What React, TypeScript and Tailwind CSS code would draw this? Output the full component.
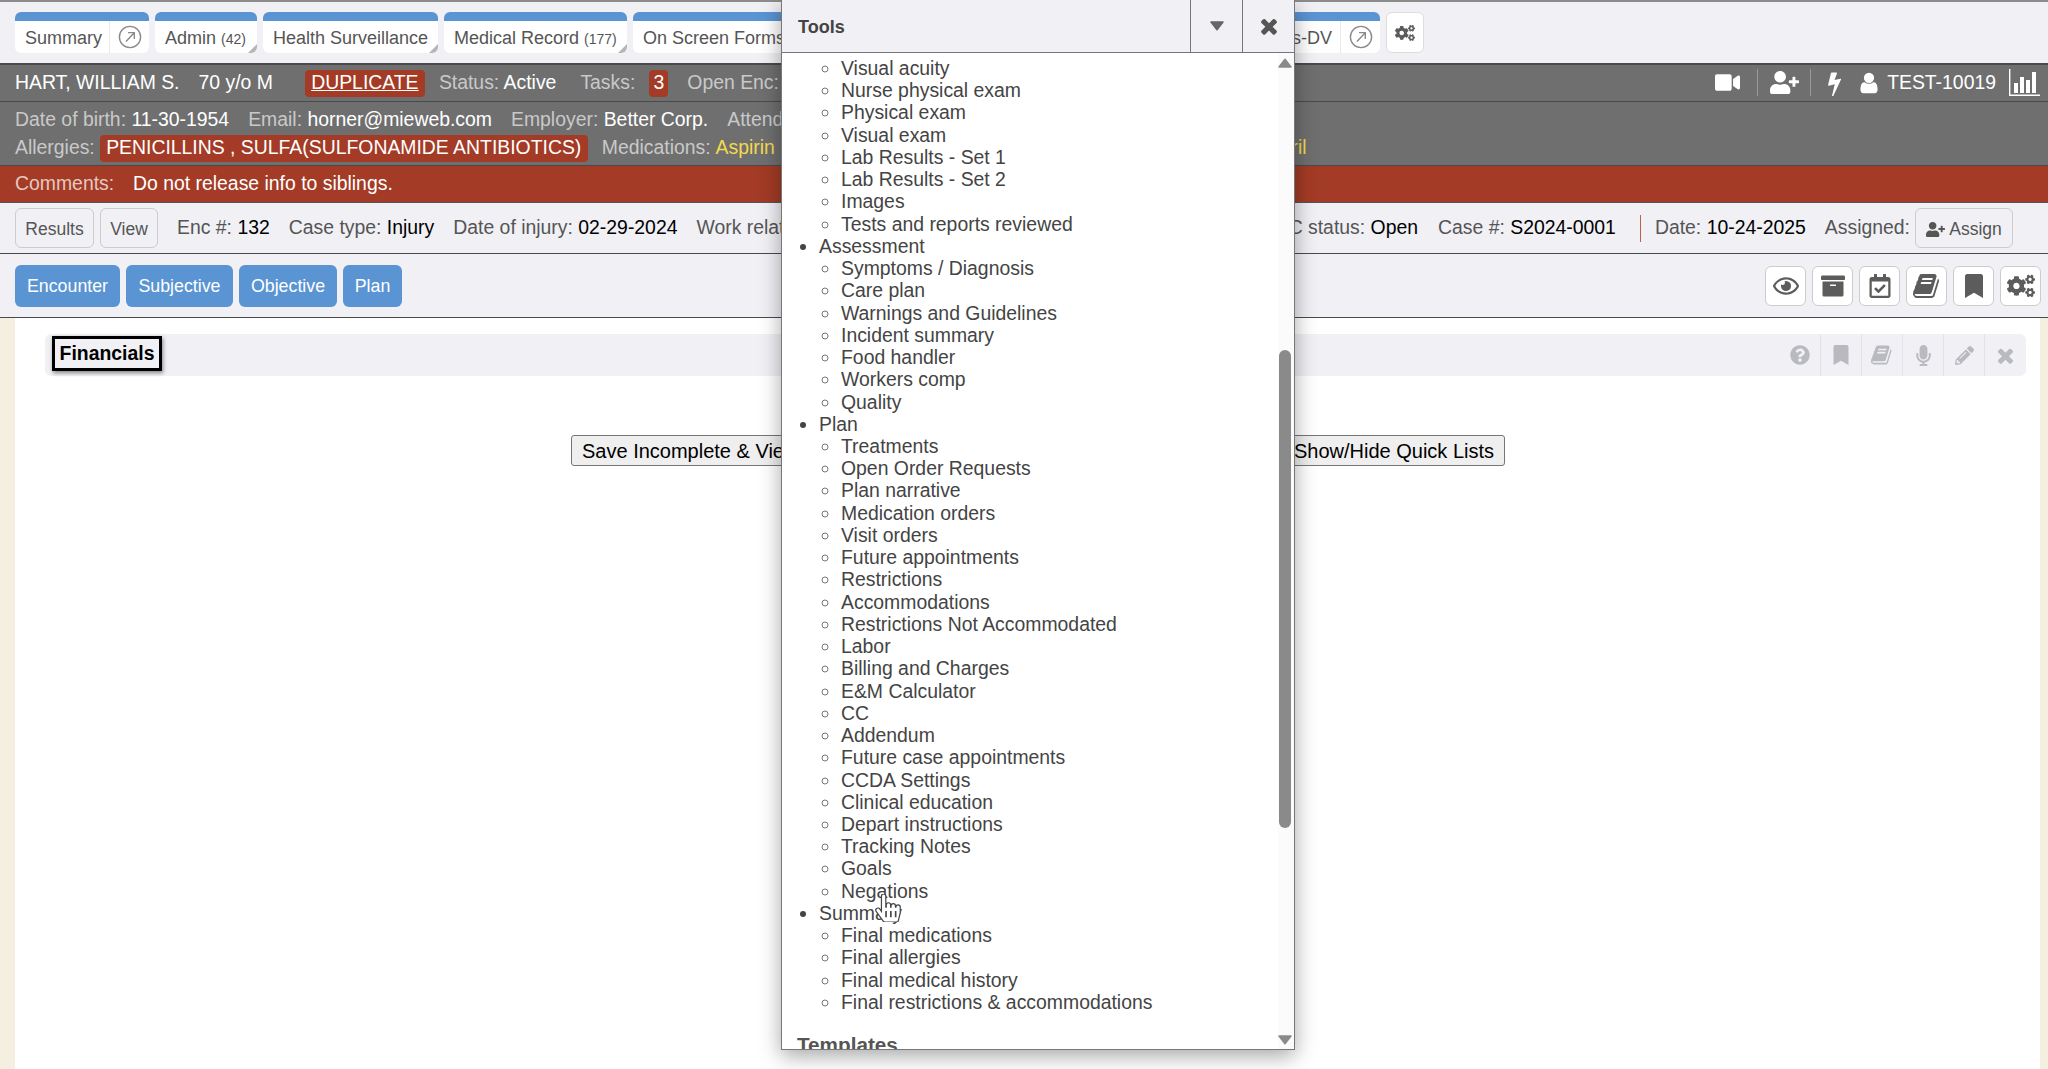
import React from "react";
import { FaVideo, FaUserPlus, FaRegEye, FaArchive, FaRegCalendarCheck, FaBookmark, FaCogs, FaQuestionCircle, FaMicrophone, FaPencilAlt, FaHandPointer } from "react-icons/fa";

const BOOK = "M1639 478q40 57 18 129l-275 906q-19 64-76.5 107.5t-122.5 43.5h-923q-77 0-148.5-53.5t-99.5-131.5q-24-67-2-127 0-4 3-27t4-37q1-8-3-21.5t-3-19.5q2-11 8-21t16.5-23.5 16.5-23.5q23-38 45-91.5t30-91.5q3-10 .5-30t-.5-28q3-11 17-28t17-23q21-36 42-92t25-90q1-9-2.5-32t.5-28q4-13 22-30.5t22-22.5q19-26 42.5-84.5t27.5-96.5q1-8-3-25.5t-2-26.5q2-8 9-18t18-23 17-21q8-12 16.5-30.5t15-35 16-36 19.5-32 26.5-23.5 36-11.5 47.5 5.5l-1 3q38-9 51-9h761q74 0 114 56t18 130l-274 906q-36 119-71.5 153.5t-128.5 34.5h-869q-27 0-38 15-11 16-1 43 24 70 144 70h923q29 0 56-15.5t35-41.5l300-987q7-22 5-57 38 15 59 43zm-1064 2q-4 13 2 22.5t20 9.5h608q13 0 25.5-9.5t16.5-22.5l21-64q4-13-2-22.5t-20-9.5h-608q-13 0-25.5 9.5t-16.5 22.5zm-83 256q-4 13 2 22.5t20 9.5h608q13 0 25.5-9.5t16.5-22.5l21-64q4-13-2-22.5t-20-9.5h-608q-13 0-25.5 9.5t-16.5 22.5z";
const TIMES = "M1490 1322q0 40-28 68l-136 136q-28 28-68 28t-68-28l-294-294-294 294q-28 28-68 28t-68-28l-136-136q-28-28-28-68t28-68l294-294-294-294q-28-28-28-68t28-68l136-136q28-28 68-28t68 28l294 294 294-294q28-28 68-28t68 28l136 136q28 28 28 68t-28 68l-294 294 294 294q28 28 28 68z";
const BOLT = "M1303 611q18 20 7 44l-540 1157q-13 25-42 25-4 0-14-2-17-5-25.5-19t-4.5-30l197-808-406 101q-4 1-12 1-18 0-31-11-18-15-13-39l201-825q4-14 16-23t28-9h328q19 0 32 12.5t13 29.5q0 8-5 18l-171 463 396-98q8-2 12-2 19 0 34 15z";
const USER = "M1536 1399q0 109-62.5 187t-150.5 78h-854q-88 0-150.5-78t-62.5-187q0-85 8.5-160.5t31.5-152 58.5-131 94-89 134.5-34.5q131 128 313 128t313-128q76 0 134.5 34.5t94 89 58.5 131 31.5 152 8.5 160.5zm-256-887q0 159-112.5 271.5t-271.5 112.5-271.5-112.5-112.5-271.5 112.5-271.5 271.5-112.5 271.5 112.5 112.5 271.5z";

function Fa4({ d, size, className = "" }: { d: string; size: number; className?: string }) {
  return (
    <svg className={className} width={size} height={size} viewBox="0 0 1792 1792" fill="currentColor">
      <path d={d} />
    </svg>
  );
}

function Tri({ up, cls }: { up?: boolean; cls: string }) {
  return (
    <svg className={cls} width="14" height="10" viewBox="0 0 14 10" fill="currentColor" stroke="currentColor" strokeWidth="1.5" strokeLinejoin="round">
      <path d={up ? "M7 1.2 L13 9 H1 Z" : "M1 1 H13 L7 8.8 Z"} />
    </svg>
  );
}

function Ext() {
  return (
    <svg width="24" height="24" viewBox="0 0 24 24" fill="none" stroke="#8a8a8a" strokeWidth="1.4">
      <circle cx="12" cy="12" r="10.6" />
      <path d="M8 16.5 L16 8 M10 7.6 H16.3 V14" />
    </svg>
  );
}

function Corner() {
  return (
    <svg className="absolute right-0 bottom-0" width="9" height="9" viewBox="0 0 9 9">
      <path d="M9 0 V9 H0 Z" fill="#b5b5b5" />
    </svg>
  );
}

function Tab({ w, label, count, corner, ext, grow, right }: { w?: string; label: string; count?: string; corner?: boolean; ext?: boolean; grow?: boolean; right?: boolean }) {
  return (
    <div className={`${w ?? ""} ${grow ? "flex-1 min-w-0" : ""} relative h-[41px] bg-white rounded-md border-t-[9px] border-[#5a94d3] flex items-center overflow-hidden`}>
      <div className={`flex-1 min-w-0 whitespace-nowrap text-[#555] text-[18px] pt-[2px] ${right ? "text-right pr-[8px]" : "pl-[10px]"}`}>
        {label}
        {count && <span className="text-[14px] ml-[5px]">{count}</span>}
      </div>
      {ext && (
        <div className="w-[40px] h-full border-l border-[#e8e8ee] flex items-center justify-center shrink-0">
          <Ext />
        </div>
      )}
      {corner && <Corner />}
    </div>
  );
}

function L({ k, v, cls }: { k: string; v: string; cls: string }) {
  return (
    <span className={`whitespace-nowrap ${cls}`}>
      {k} <span className="text-white">{v}</span>
    </span>
  );
}

function E({ k, v, cls = "" }: { k: string; v: string; cls?: string }) {
  return (
    <span className={`whitespace-nowrap text-[#555] ${cls}`}>
      {k} <span className="text-black">{v}</span>
    </span>
  );
}

function ActBtn({ children }: { children: React.ReactNode }) {
  return (
    <div className="w-[41px] h-[40px] bg-white border border-[#ccc] rounded-md flex items-center justify-center text-[#5c5c5c]">
      {children}
    </div>
  );
}

function BarIcon({ children, first }: { children: React.ReactNode; first?: boolean }) {
  return (
    <div className={`w-[41px] h-full flex items-center justify-center text-[#b9b9c0] ${first ? "" : "border-l border-[#e2e2e8]"}`}>
      {children}
    </div>
  );
}

const Blue = ({ label, w }: { label: string; w: string }) => (
  <div className={`${w} h-[42px] bg-[#5a94d3] rounded-md text-white flex items-center justify-center text-[17.8px]`}>{label}</div>
);

const groups: { title: string | null; items: string[] }[] = [
  { title: null, items: ["Visual acuity", "Nurse physical exam", "Physical exam", "Visual exam", "Lab Results - Set 1", "Lab Results - Set 2", "Images", "Tests and reports reviewed"] },
  { title: "Assessment", items: ["Symptoms / Diagnosis", "Care plan", "Warnings and Guidelines", "Incident summary", "Food handler", "Workers comp", "Quality"] },
  { title: "Plan", items: ["Treatments", "Open Order Requests", "Plan narrative", "Medication orders", "Visit orders", "Future appointments", "Restrictions", "Accommodations", "Restrictions Not Accommodated", "Labor", "Billing and Charges", "E&M Calculator", "CC", "Addendum", "Future case appointments", "CCDA Settings", "Clinical education", "Depart instructions", "Tracking Notes", "Goals", "Negations"] },
  { title: "Summary", items: ["Final medications", "Final allergies", "Final medical history", "Final restrictions & accommodations"] },
];

export default function App() {
  return (
    <div className="relative h-[1069px] w-[2048px] overflow-hidden bg-white flex flex-col font-['Liberation_Sans',Arial,sans-serif] text-[19.4px]">
      {/* tabs */}
      <div className="h-[65px] shrink-0 bg-[#f0f0f5] border-t-2 border-b-2 border-t-[#8c8c8c] border-b-[#4a4a4a] pt-[10px] pl-[15px]">
        <div className="flex gap-[6px] w-[1409px]">
          <Tab w="w-[134px]" label="Summary" ext />
          <Tab w="w-[102px]" label="Admin" count="(42)" corner />
          <Tab w="w-[175px]" label="Health Surveillance" corner />
          <Tab w="w-[183px]" label="Medical Record" count="(177)" corner />
          <Tab w="w-[250px]" label="On Screen Forms" corner />
          <Tab grow right label="Test Forms-DV" ext />
          <div className="w-[38px] h-[41px] bg-white border border-[#ddd] rounded-md flex items-center justify-center text-[#5c5c5c]">
            <FaCogs size={20} />
          </div>
        </div>
      </div>

      {/* patient row */}
      <div className="h-[37px] shrink-0 bg-[#6f6f6f] border-b border-[#4a4a4a] flex items-center pl-[15px] pr-[8px] text-white">
        <span className="whitespace-nowrap">HART, WILLIAM S.</span>
        <span className="whitespace-nowrap ml-[19px]">70 y/o M</span>
        <span className="ml-[32px] h-[27px] w-[120px] bg-[#a33b26] rounded flex items-center justify-center underline">DUPLICATE</span>
        <L cls="ml-[14px] text-[#c9c9c9]" k="Status:" v="Active" />
        <span className="ml-[24px] text-[#c9c9c9]">Tasks:</span>
        <span className="ml-[14px] h-[27px] w-[19px] bg-[#a33b26] rounded flex items-center justify-center">3</span>
        <span className="ml-[19px] text-[#c9c9c9] whitespace-nowrap">Open Enc:</span>
        <div className="ml-auto flex items-center">
          <FaVideo size={25} />
          <div className="w-px h-[27px] bg-[#999] ml-[17px] mr-[12px]" />
          <FaUserPlus size={29} />
          <div className="w-px h-[27px] bg-[#999] ml-[11px] mr-[11px]" />
          <Fa4 d={BOLT} size={26} />
          <Fa4 d={USER} size={24} className="ml-[9px]" />
          <span className="ml-[6px] whitespace-nowrap">TEST-10019</span>
          <svg className="ml-[12px]" width="32" height="28" viewBox="0 0 32 28" fill="#fff">
            <path d="M1 0 H2.4 V25.6 H32 V27 H1 Z" />
            <rect x="6" y="14" width="4" height="10" />
            <rect x="12" y="8" width="4" height="16" />
            <rect x="18" y="11" width="4" height="13" />
            <rect x="24" y="3" width="4" height="21" />
          </svg>
        </div>
      </div>

      {/* demographics */}
      <div className="h-[64px] shrink-0 bg-[#6f6f6f] border-b border-[#4a4a4a] pl-[15px] pt-[4px] text-[#c9c9c9]">
        <div className="h-[28px] flex items-center">
          <L cls="" k="Date of birth:" v="11-30-1954" />
          <L cls="ml-[19px]" k="Email:" v="horner@mieweb.com" />
          <L cls="ml-[19px]" k="Employer:" v="Better Corp." />
          <L cls="ml-[19px]" k="Attending:" v="Dr. Horner" />
        </div>
        <div className="h-[28px] flex items-center">
          <span>Allergies:</span>
          <span className="ml-[5px] h-[27px] w-[488px] bg-[#a33b26] rounded text-white flex items-center justify-center whitespace-nowrap">PENICILLINS , SULFA(SULFONAMIDE ANTIBIOTICS)</span>
          <span className="ml-[14px] whitespace-nowrap">Medications:</span>
          <span className="ml-[5px] w-[591px] flex justify-between text-[#f2d94e] whitespace-nowrap">
            <span>Aspirin , Metformin</span>
            <span>Lisinopril</span>
          </span>
        </div>
      </div>

      {/* comments */}
      <div className="h-[37px] shrink-0 bg-[#a33b26] border-b border-[#555] flex items-center pl-[15px] text-white">
        <span className="text-[#e6c8c0] w-[118px]">Comments:</span>
        <span>Do not release info to siblings.</span>
      </div>

      {/* encounter row */}
      <div className="h-[51px] shrink-0 bg-[#f0f0f5] border-b border-[#4a4a4a] flex items-center pl-[15px] pr-[35px]">
        <div className="w-[79px] h-[40px] pt-[2px] border border-[#ccc] rounded-md flex items-center justify-center text-[#555] text-[17.5px]">Results</div>
        <div className="ml-[6px] w-[58px] h-[40px] pt-[2px] border border-[#ccc] rounded-md flex items-center justify-center text-[#555] text-[17.5px]">View</div>
        <E cls="ml-[19px]" k="Enc #:" v="132" />
        <E cls="ml-[19px]" k="Case type:" v="Injury" />
        <E cls="ml-[19px]" k="Date of injury:" v="02-29-2024" />
        <E cls="ml-[19px]" k="Work related:" v="Yes" />
        <div className="ml-auto flex items-center">
          <E k="WC status:" v="Open" />
          <E cls="ml-[20px]" k="Case #:" v="S2024-0001" />
          <div className="ml-[24px] w-px h-[27px] bg-[#c0604d]" />
          <E cls="ml-[14px]" k="Date:" v="10-24-2025" />
          <span className="ml-[19px] text-[#555]">Assigned:</span>
          <div className="ml-[5px] w-[98px] h-[40px] pt-[2px] border border-[#ccc] rounded-md flex items-center justify-center gap-[4px] text-[#555] text-[17.5px]">
            <FaUserPlus size={19} /> Assign
          </div>
        </div>
      </div>

      {/* section buttons */}
      <div className="h-[64px] shrink-0 bg-[#f0f0f5] border-b border-[#4a4a4a] flex items-center pl-[15px] pr-[7px] pt-[1px]">
        <div className="flex gap-[6px]">
          <Blue w="w-[105px]" label="Encounter" />
          <Blue w="w-[107px]" label="Subjective" />
          <Blue w="w-[98px]" label="Objective" />
          <Blue w="w-[59px]" label="Plan" />
        </div>
        <div className="ml-auto flex gap-[6px]">
          <ActBtn><FaRegEye size={26} /></ActBtn>
          <ActBtn><FaArchive size={24} /></ActBtn>
          <ActBtn><FaRegCalendarCheck size={24} /></ActBtn>
          <ActBtn><Fa4 d={BOOK} size={28} /></ActBtn>
          <ActBtn><FaBookmark size={24} /></ActBtn>
          <ActBtn><FaCogs size={28} /></ActBtn>
        </div>
      </div>

      {/* content */}
      <div className="flex-1 flex min-h-0">
        <div className="w-[15px] bg-[#f5efe2]" />
        <div className="flex-1 bg-white pt-[16px] pl-[30px] pr-[14px]">
          <div className="h-[42px] bg-[#f0f0f5] rounded-md flex items-center pl-[7px]">
            <div className="h-[35px] w-[110px] pt-[2px] border-[3px] border-black shadow-[1px_2px_4px_rgba(0,0,0,0.45)] flex items-center justify-center font-bold text-black text-[19.4px] -mt-[4px]">Financials</div>
            <div className="ml-auto flex h-full pr-[1px]">
              <BarIcon first><FaQuestionCircle size={20} /></BarIcon>
              <BarIcon><FaBookmark size={20} /></BarIcon>
              <BarIcon><Fa4 d={BOOK} size={22} /></BarIcon>
              <BarIcon><FaMicrophone size={21} /></BarIcon>
              <BarIcon><FaPencilAlt size={19} /></BarIcon>
              <BarIcon><Fa4 d={TIMES} size={23} /></BarIcon>
            </div>
          </div>
          <div className="mt-[59px] ml-[526px] w-[934px] flex justify-between">
            <button className="h-[31px] px-[10px] bg-[#efefef] border border-[#767676] rounded-[3px] text-black text-[20px] whitespace-nowrap">Save Incomplete &amp; View Next</button>
            <button className="h-[31px] px-[10px] bg-[#efefef] border border-[#767676] rounded-[3px] text-black text-[20px] whitespace-nowrap">Show/Hide Quick Lists</button>
          </div>
        </div>
        <div className="w-[8px] bg-[#f5efe2]" />
      </div>

      {/* tools popup */}
      <div className="absolute left-[781px] top-0 w-[514px] h-[1050px] bg-white border-x border-b border-[#777] shadow-[0_6px_20px_rgba(0,0,0,0.35)] flex flex-col">
        <div className="h-[53px] shrink-0 bg-[#f0f0f5] border-b border-[#777] flex items-stretch">
          <div className="flex-1 flex items-center pl-[16px] pt-[2px] font-bold text-[18px] text-[#444]">Tools</div>
          <div className="w-[52px] border-l border-[#777] flex items-center justify-center text-[#666]"><Tri cls="" /></div>
          <div className="w-[52px] border-l border-[#777] flex items-center justify-center text-[#555]"><Fa4 d={TIMES} size={24} /></div>
        </div>
        <div className="relative flex-1 min-h-0 overflow-hidden pt-[4px] text-[#444] leading-[22.23px]">
          {groups.map((g) =>
            g.title === null ? (
              <ul key="first" className="list-[circle] pl-[59px] marker:text-[#777]">
                {g.items.map((i) => <li key={i}>{i}</li>)}
              </ul>
            ) : (
              <ul key={g.title} className="list-disc pl-[37px]">
                <li>
                  {g.title}
                  <ul className="list-[circle] pl-[22px] marker:text-[#777]">
                    {g.items.map((i) => <li key={i}>{i}</li>)}
                  </ul>
                </li>
              </ul>
            )
          )}
          <div className="mt-[21px] pl-[15px] font-bold text-[20.7px] text-[#555]">Templates</div>

          {/* scrollbar */}
          <div className="absolute right-0 top-0 bottom-0 w-[16px] bg-[#fbfbfb]" />
          <Tri up cls="absolute right-[2px] top-[5px] text-[#8a8a8a]" />
          <div className="absolute right-[3px] top-[297px] w-[12px] h-[478px] rounded-md bg-[#8a8a8a]" />
          <Tri cls="absolute right-[2px] bottom-[4px] text-[#8a8a8a]" />

          {/* mouse cursor */}
          <FaHandPointer size={28} stroke="#444" strokeWidth={22} className="absolute left-[92px] top-[841px] text-white" />
        </div>
      </div>
    </div>
  );
}
